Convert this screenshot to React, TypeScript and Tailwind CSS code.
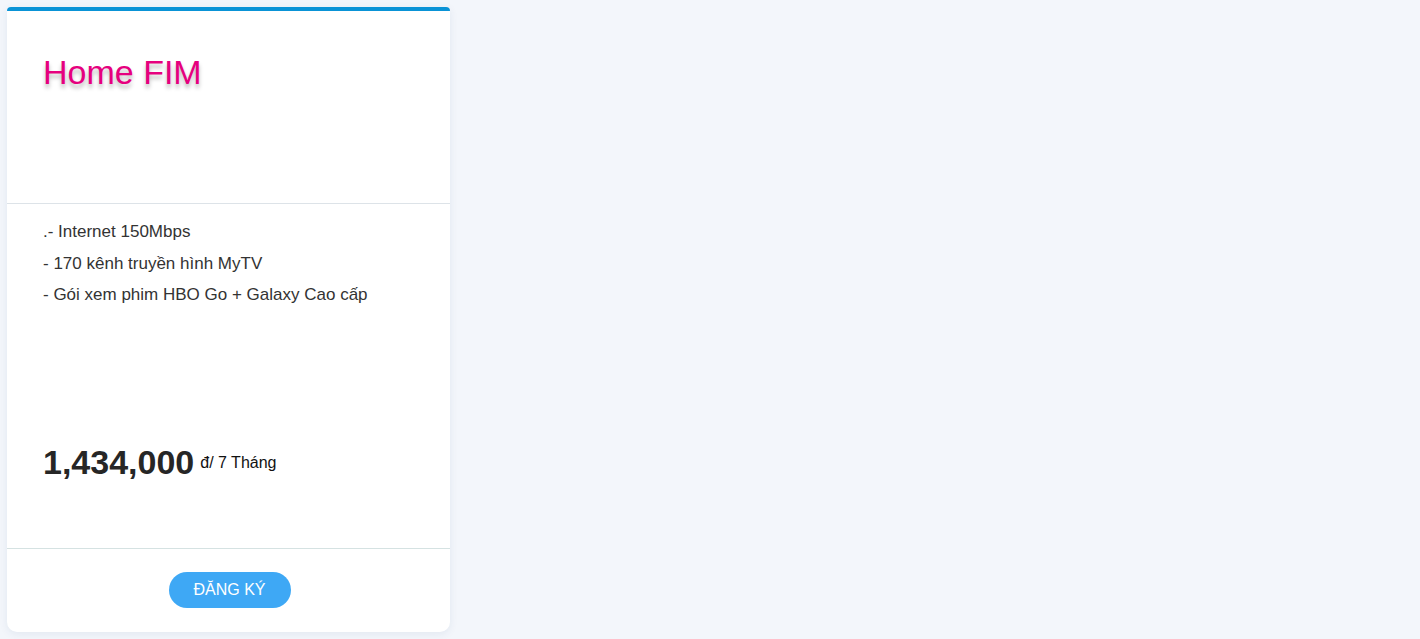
export default function App() {
    return (
        <div className="min-h-[639px] w-full bg-[#f3f6fb] pt-[7px] pl-[7px] font-['Liberation_Sans',Arial,sans-serif]">
            <div className="w-[443px] bg-white border-t-4 border-[#0a93d6] rounded-t-[4px] rounded-b-[10px] shadow-[0_2px_8px_rgba(30,60,120,0.08)] flex flex-col">
                <div className="h-[193px] px-[36px] pt-[41px] border-b border-[#dde3e8]">
                    <h2 className="text-[34px] leading-[41px] text-[#e6007e] [text-shadow:0_4px_4px_rgba(0,0,0,0.28)]">Home FIM</h2>
                </div>

                <div className="h-[344px] px-[36px] pt-[12px] flex flex-col">
                    <ul className="text-[17px] leading-[31.5px] text-[#333333]">
                        <li>.- Internet 150Mbps</li>
                        <li>- 170 kênh truyền hình MyTV</li>
                        <li>- Gói xem phim HBO Go + Galaxy Cao cấp</li>
                    </ul>
                    <div className="mt-[131px] flex items-center gap-[6px]">
                        <span className="text-[34px] leading-[40px] font-bold text-[#262626]">1,434,000</span>
                        <span className="mt-[3px] text-[16px] leading-[20px] text-[#111111]">đ/ 7 Tháng</span>
                    </div>
                </div>

                <div className="border-t border-[#d5e2e2] pt-[23px] pb-[24px] flex justify-center">
                    <button className="ml-[2px] w-[122px] h-[36px] rounded-full bg-[#3ea8f5] text-white text-[16px]">ĐĂNG KÝ</button>
                </div>
            </div>
        </div>
    );
}
